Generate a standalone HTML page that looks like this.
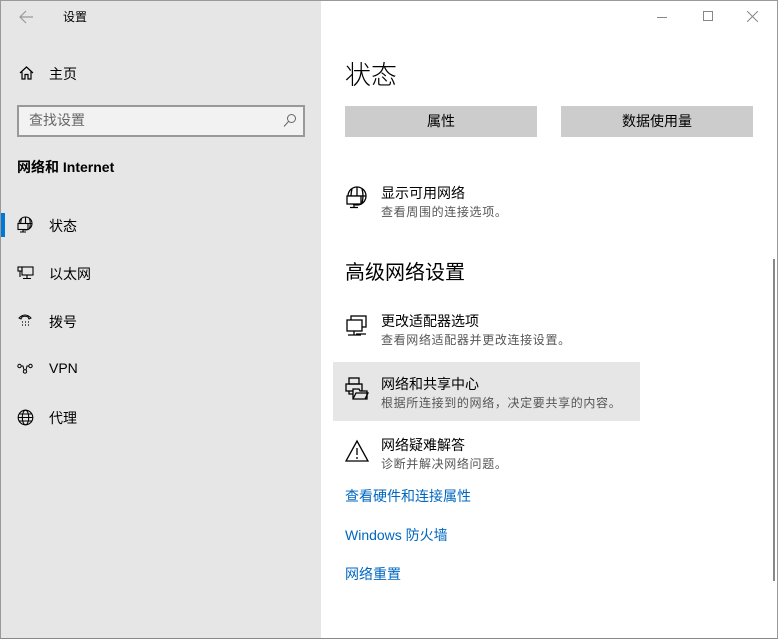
<!DOCTYPE html>
<html><head><meta charset="utf-8"><style>
*{margin:0;padding:0;box-sizing:border-box}
body{width:778px;height:640px;overflow:hidden;background:#fff;font-family:"Liberation Sans","Noto Sans CJK SC",sans-serif;color:#000;position:relative}
.win{position:absolute;left:0;top:0;width:778px;height:639px;border:1px solid #999;border-bottom-color:#888}
.side{position:absolute;left:1px;top:1px;width:320px;height:637px;background:#e6e6e6}
.t{position:absolute;white-space:nowrap}
.ic{position:absolute}
.btn{position:absolute;top:106px;height:31px;background:#ccc;font-size:14px;text-align:center;line-height:30px}
.h{font-size:14px}
.s{font-size:12px;color:#555;letter-spacing:0.65px}
.link{font-size:14px;color:#0067c0}
</style></head><body>
<div class="win"></div>
<div class="side"></div>
<svg class="ic" style="left:18px;top:10px" width="16" height="14" viewBox="0 0 16 14"><path d="M8 1L2 7L8 13M2 7H15" fill="none" stroke="#999" stroke-width="1.2"/></svg>
<div class="t" style="left:63px;top:8px;font-size:12px">设置</div>
<svg class="ic" style="left:19px;top:66px" width="15" height="14" viewBox="0 0 15 14"><path d="M1 7L7.5 1L14 7M3 5.5V13H6V8.5H9V13H12V5.5" fill="none" stroke="#000" stroke-width="1.2"/></svg>
<div class="t" style="left:49px;top:64px;font-size:14px">主页</div>
<div class="t" style="left:17px;top:105px;width:288px;height:32px;border:2px solid #999;background:#f2f2f2"></div>
<div class="t" style="left:29px;top:110px;font-size:14px;color:#666">查找设置</div>
<svg class="ic" style="left:283px;top:113px" width="14" height="15" viewBox="0 0 14 15"><circle cx="8.5" cy="5.5" r="4" fill="none" stroke="#666"/><path d="M5.5 8.5L1 13.5" stroke="#666"/></svg>
<div class="t" style="left:17px;top:157px;font-size:14px;font-weight:bold">网络和 Internet</div>
<div class="t" style="left:1px;top:213px;width:4px;height:24px;background:#0078d7"></div>
<svg class="ic" style="left:17px;top:216px" width="17" height="17" viewBox="0 0 17 17" fill="none" stroke="#000" stroke-width="1.1"><circle cx="8.5" cy="7.5" r="6.5"/><path d="M2 7.5H15M8.5 1V14M4.5 2.5Q3 7.5 4.5 12.5M12.5 2.5Q14 7.5 12.5 12.5"/><rect x="1" y="7.5" width="10" height="6" fill="#e6e6e6"/><path d="M6 13.5V16M3 16H9"/></svg>
<div class="t" style="left:49px;top:216px;font-size:14px">状态</div>
<svg class="ic" style="left:17px;top:266px" width="17" height="14" viewBox="0 0 17 14" fill="none" stroke="#000" stroke-width="1.1"><rect x="5" y="1" width="11" height="8"/><rect x="1" y="1" width="4" height="4"/><path d="M10 9V12M6 12.5H14M3 5V11"/></svg>
<div class="t" style="left:49px;top:264px;font-size:14px">以太网</div>
<svg class="ic" style="left:17px;top:313px" width="16" height="14" viewBox="0 0 16 14" fill="none" stroke="#000" stroke-width="1"><path d="M2 5Q8 -1 14 5L12 6L11 4Q8 2.5 5 4L4 6Z"/><path d="M5 9h1M8 9h1M11 9h1M5 12h1M8 12h1M11 12h1" stroke-width="1.2"/></svg>
<div class="t" style="left:49px;top:312px;font-size:14px">拨号</div>
<svg class="ic" style="left:17px;top:363px" width="16" height="12" viewBox="0 0 16 12" fill="none" stroke="#000" stroke-width="1"><circle cx="2.5" cy="3" r="1.7"/><circle cx="13.5" cy="3" r="1.7"/><circle cx="8" cy="8.5" r="1.7"/><path d="M4 3H6L7 7M12 3H10L9 7"/></svg>
<div class="t" style="left:49px;top:360px;font-size:14px">VPN</div>
<svg class="ic" style="left:17px;top:409px" width="17" height="17" viewBox="0 0 17 17" fill="none" stroke="#000" stroke-width="1.1"><circle cx="8.5" cy="8.5" r="7.3"/><ellipse cx="8.5" cy="8.5" rx="3.2" ry="7.3"/><path d="M1.2 8.5H15.8M2.5 5H14.5M2.5 12H14.5"/></svg>
<div class="t" style="left:49px;top:408px;font-size:14px">代理</div>

<div class="t" style="left:657px;top:17px;width:10px;border-top:1px solid #888"></div>
<div class="t" style="left:703px;top:11px;width:10px;height:10px;border:1px solid #888"></div>
<svg class="ic" style="left:747px;top:11px" width="11" height="11" viewBox="0 0 11 11"><path d="M0 0L11 11M11 0L0 11" stroke="#888"/></svg>
<div class="t" style="left:345px;top:55px;font-size:26px;font-weight:300">状态</div>
<div class="btn" style="left:345px;width:192px">属性</div>
<div class="btn" style="left:561px;width:192px">数据使用量</div>

<svg class="ic" style="left:345px;top:186px" width="24" height="24" viewBox="0 0 24 24" fill="none" stroke="#000" stroke-width="1.3"><circle cx="12" cy="10" r="9"/><path d="M3 10H21M12 1V19M7 3Q5 10 7 17M17 3Q19 10 17 17"/><rect x="2" y="10" width="14" height="8" fill="#fff"/><path d="M9 18V21M5 21.5H13"/></svg>
<div class="t h" style="left:381px;top:183px">显示可用网络</div>
<div class="t s" style="left:381px;top:203px">查看周围的连接选项。</div>

<div class="t" style="left:345px;top:256px;font-size:20px">高级网络设置</div>

<svg class="ic" style="left:345px;top:314px" width="24" height="24" viewBox="0 0 24 24" fill="none" stroke="#000" stroke-width="1.3"><rect x="6" y="2" width="15" height="11"/><rect x="2" y="6" width="15" height="11" fill="#fff"/><path d="M9 17V21M3 21H16M11 20H21"/></svg>
<div class="t h" style="left:381px;top:311px">更改适配器选项</div>
<div class="t s" style="left:381px;top:331px">查看网络适配器并更改连接设置。</div>

<div class="t" style="left:333px;top:362px;width:307px;height:59px;background:#e6e6e6"></div>
<svg class="ic" style="left:345px;top:377px" width="24" height="24" viewBox="0 0 24 24" fill="none" stroke="#000" stroke-width="1.3"><rect x="4" y="1" width="10" height="6"/><rect x="1" y="7" width="16" height="7"/><path d="M4 14V17H8"/><path d="M8 12H14L15 14H22V22H8Z" fill="#e6e6e6"/><path d="M8 22L11 16H23L20 22"/></svg>
<div class="t h" style="left:381px;top:374px">网络和共享中心</div>
<div class="t s" style="left:381px;top:394px">根据所连接到的网络，决定要共享的内容。</div>

<svg class="ic" style="left:345px;top:439px" width="24" height="24" viewBox="0 0 24 24" fill="none" stroke="#000" stroke-width="1.3"><path d="M12 2L23 22H1Z"/><path d="M12 9V16M12 18V20"/></svg>
<div class="t h" style="left:381px;top:435px">网络疑难解答</div>
<div class="t s" style="left:381px;top:455px">诊断并解决网络问题。</div>

<div class="t link" style="left:345px;top:486px">查看硬件和连接属性</div>
<div class="t link" style="left:345px;top:525px">Windows 防火墙</div>
<div class="t link" style="left:345px;top:564px">网络重置</div>

<div class="t" style="left:773px;top:259px;width:2px;height:322px;background:#888"></div>
</body></html>
